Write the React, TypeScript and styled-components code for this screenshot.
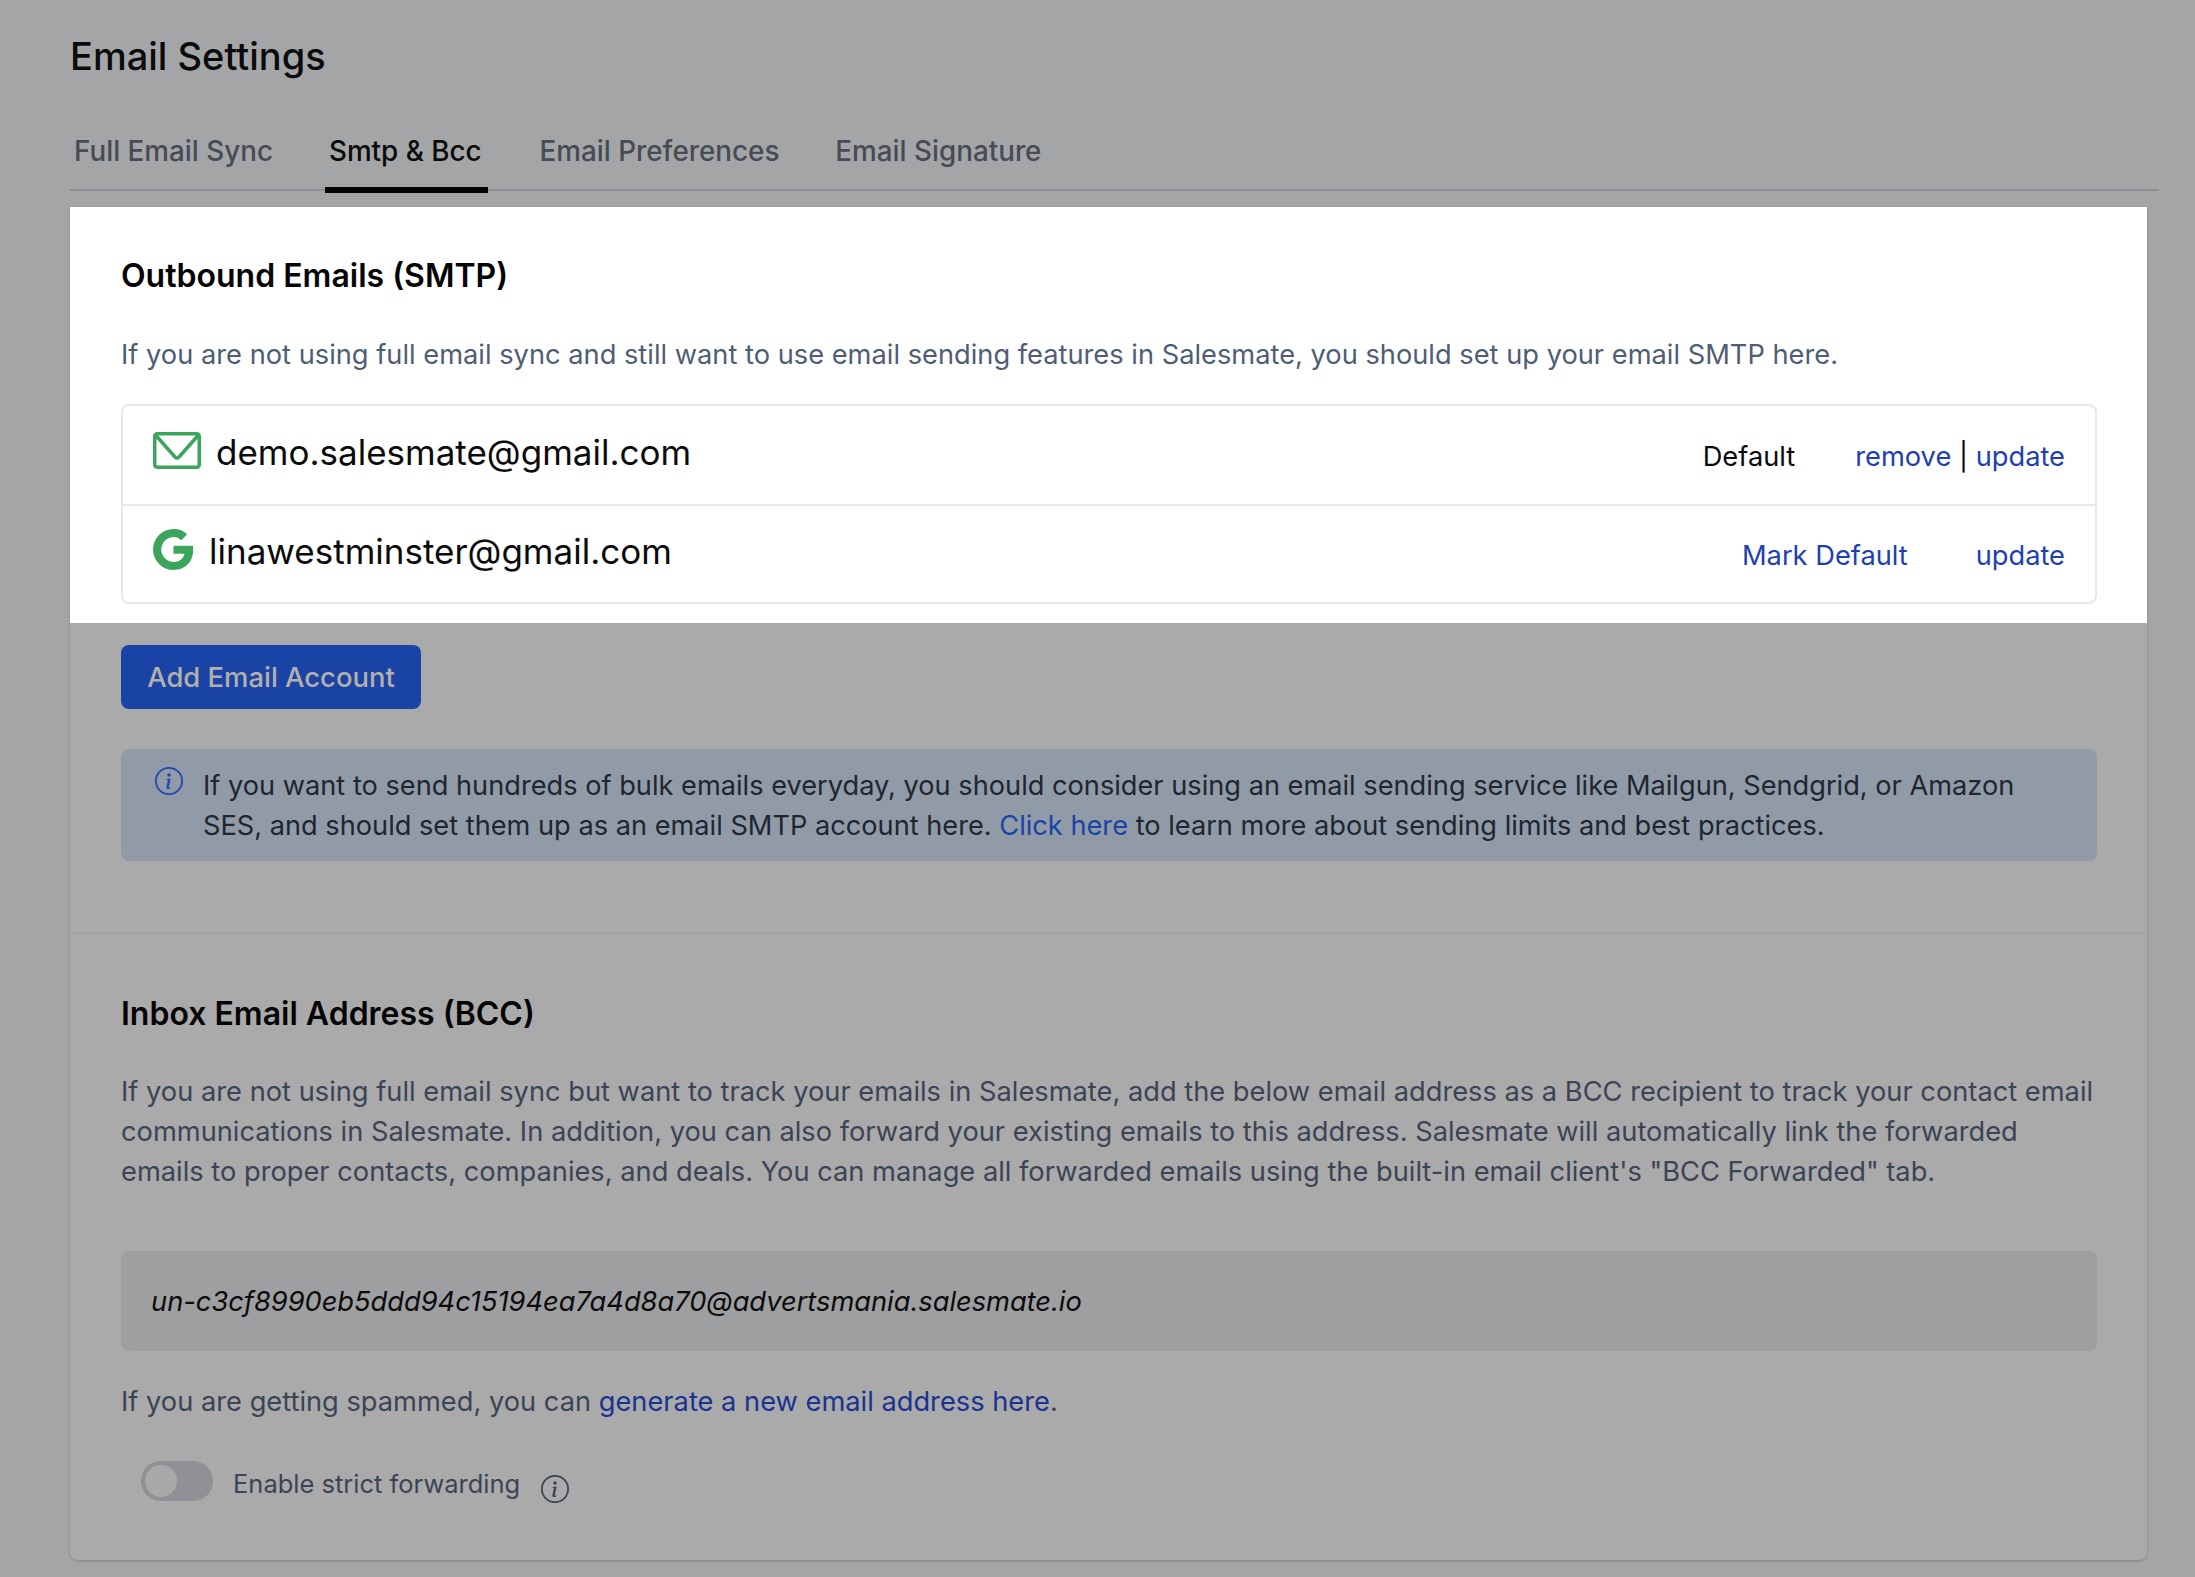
import React from 'react';
import styled, { createGlobalStyle } from 'styled-components';
import { BsGoogle as GoogleIcon, BsInfoCircle as InfoIcon } from 'react-icons/bs';

const GlobalStyle = createGlobalStyle`
  html, body {
    margin: 0;
    background: #a4a5a7;
    font-family: Inter, "Liberation Sans", sans-serif;
  }
`;

const Page = styled.div`
  width: 2195px;
  height: 1577px;
  box-sizing: border-box;
  padding: 30px 36px 0 70px;
  overflow: hidden;
`;

const PageTitle = styled.h1`
  margin: 0;
  font-size: 38px;
  line-height: 52px;
  font-weight: 500;
  color: #0b0b0c;
`;

const Tabs = styled.div`
  display: flex;
  gap: 48px;
  margin-top: 29px;
  height: 80px;
  box-sizing: border-box;
  border-bottom: 2px solid #8e8f92;
`;

const Tab = styled.div<{ $active?: boolean }>`
  height: 82px;
  box-sizing: border-box;
  padding: 23px ${(p) => (p.$active ? '6px' : '4px')} 0 4px;
  font-size: 27.8px;
  line-height: 34px;
  font-weight: 500;
  color: ${(p) => (p.$active ? '#0b0b0c' : '#474b55')};
  border-bottom: ${(p) => (p.$active ? '6px solid #050505' : 'none')};
`;

const Card = styled.div`
  width: 2077px;
  margin-top: 16px;
  background: #aaaaaa;
  border-radius: 0 0 8px 8px;
  box-shadow: 0 1px 3px rgba(0, 0, 0, 0.2);
`;

const Highlighted = styled.section`
  background: #ffffff;
  padding: 50px 50px 19px 51px;
`;

const Dimmed = styled.section`
  padding: 22px 50px 71px 51px;
  border-bottom: 2px solid #a0a1a2;
`;

const BccSection = styled.section`
  padding: 61px 50px 59px 51px;
`;

const SectionTitle = styled.h2`
  margin: 0;
  font-size: 32px;
  line-height: 38px;
  font-weight: 600;
  color: #050505;
`;

const Description = styled.p<{ $dim?: boolean }>`
  margin: ${(p) => (p.$dim ? '39px' : '40px')} 0 0;
  font-size: 27.25px;
  line-height: 40px;
  color: ${(p) => (p.$dim ? '#3b4455' : '#4f5d75')};
`;

const AccountList = styled.div`
  margin-top: 29px;
  width: 1976px;
  box-sizing: border-box;
  border: 2px solid #e8e8ec;
  border-radius: 8px;
`;

const AccountRow = styled.div`
  display: flex;
  align-items: center;
  height: 94px;
  padding: 4px 30px 0;
  & + & {
    height: 92px;
    border-top: 2px solid #e8e8ec;
  }
`;

const AccountName = styled.div`
  display: flex;
  align-items: center;
  gap: 15px;
  flex: 1;
  margin-top: -11px;
  font-size: 35px;
  line-height: 48px;
  color: #0b0b0c;
  svg {
    color: #3ca55c;
    flex: none;
    margin-bottom: 2px;
  }
`;

const DefaultLabel = styled.span`
  font-size: 27.25px;
  line-height: 40px;
  color: #0b0b0c;
`;

const ActionLink = styled.a`
  font-size: 27.25px;
  line-height: 40px;
  color: #1e40af;
  text-decoration: none;
`;

const InlineActions = styled.div`
  margin-left: 60px;
  font-size: 27.25px;
  line-height: 40px;
  color: #0b0b0c;
`;

const SpacedActions = styled.div`
  display: flex;
  justify-content: space-between;
  width: 323px;
`;

const AddButton = styled.button`
  display: block;
  width: 300px;
  height: 64px;
  padding: 0;
  border: none;
  border-radius: 8px;
  background: #1a43a6;
  color: #b3b0ab;
  font: 500 27.4px/40px Inter, "Liberation Sans", sans-serif;
`;

const Notice = styled.div`
  display: flex;
  gap: 20px;
  margin-top: 40px;
  width: 1976px;
  height: 112px;
  box-sizing: border-box;
  padding: 17px 34px 0;
  border-radius: 8px;
  background: #919ba7;
  font-size: 27.2px;
  line-height: 40px;
  color: #20252f;
  svg {
    flex: none;
    margin-top: 1px;
    color: #1e48ad;
  }
`;

const NoticeLink = styled.a`
  color: #1a43a6;
  text-decoration: none;
`;

const BccAddress = styled.div`
  margin-top: 59px;
  width: 1976px;
  height: 100px;
  box-sizing: border-box;
  padding: 0 30px;
  display: flex;
  align-items: center;
  border-radius: 8px;
  background: #9e9fa1;
  font-size: 27.25px;
  font-style: italic;
  color: #0b0b0c;
`;

const SpamNote = styled.p`
  margin: 31px 0 0;
  font-size: 27.25px;
  line-height: 40px;
  color: #3b4455;
`;

const SpamLink = styled.a`
  color: #1a3390;
  text-decoration: none;
`;

const ForwardingRow = styled.div`
  display: flex;
  align-items: center;
  margin: 39px 0 0 20px;
  height: 40px;
`;

const Toggle = styled.div`
  width: 72px;
  height: 40px;
  box-sizing: border-box;
  padding: 4px;
  border-radius: 20px;
  background: #8f9197;
`;

const Knob = styled.div`
  width: 32px;
  height: 32px;
  border-radius: 50%;
  background: #a9a9a9;
`;

const ForwardingLabel = styled.span`
  margin: 6px 0 0 20px;
  font-size: 25.5px;
  line-height: 40px;
  color: #3b4455;
`;

const ForwardingInfo = styled(InfoIcon)`
  margin: 16px 0 0 21px;
  color: #3b4455;
`;

const MailIcon = () => (
  <svg width="48" height="37" viewBox="0 0 48 37" fill="none" stroke="currentColor" strokeWidth="3.5" strokeLinejoin="round" strokeLinecap="round">
    <rect x="1.75" y="1.75" width="44.5" height="33.5" rx="2.5" />
    <path d="M2.5 3 L22 25 Q24 27 26 25 L45.5 3" />
  </svg>
);

export default function App() {
  return (
    <Page>
      <GlobalStyle />
      <PageTitle>Email Settings</PageTitle>
      <Tabs>
        <Tab>Full Email Sync</Tab>
        <Tab $active>{'Smtp & Bcc'}</Tab>
        <Tab>Email Preferences</Tab>
        <Tab>Email Signature</Tab>
      </Tabs>
      <Card>
        <Highlighted>
          <SectionTitle>Outbound Emails (SMTP)</SectionTitle>
          <Description>
            If you are not using full email sync and still want to use email sending features in Salesmate, you should set up your email SMTP here.
          </Description>
          <AccountList>
            <AccountRow>
              <AccountName>
                <MailIcon />
                demo.salesmate@gmail.com
              </AccountName>
              <DefaultLabel>Default</DefaultLabel>
              <InlineActions>
                <ActionLink>remove</ActionLink> | <ActionLink>update</ActionLink>
              </InlineActions>
            </AccountRow>
            <AccountRow>
              <AccountName>
                <GoogleIcon size={41} />
                linawestminster@gmail.com
              </AccountName>
              <SpacedActions>
                <ActionLink>Mark Default</ActionLink>
                <ActionLink>update</ActionLink>
              </SpacedActions>
            </AccountRow>
          </AccountList>
        </Highlighted>
        <Dimmed>
          <AddButton>Add Email Account</AddButton>
          <Notice>
            <InfoIcon size={28} />
            <div>
              If you want to send hundreds of bulk emails everyday, you should consider using an email sending service like Mailgun, Sendgrid, or Amazon SES, and should set them up as an email SMTP account here. <NoticeLink>Click here</NoticeLink> to learn more about sending limits and best practices.
            </div>
          </Notice>
        </Dimmed>
        <BccSection>
          <SectionTitle>Inbox Email Address (BCC)</SectionTitle>
          <Description $dim>
            If you are not using full email sync but want to track your emails in Salesmate, add the below email address as a BCC recipient to track your contact email communications in Salesmate. In addition, you can also forward your existing emails to this address. Salesmate will automatically link the forwarded emails to proper contacts, companies, and deals. You can manage all forwarded emails using the built-in email client's "BCC Forwarded" tab.
          </Description>
          <BccAddress>un-c3cf8990eb5ddd94c15194ea7a4d8a70@advertsmania.salesmate.io</BccAddress>
          <SpamNote>
            If you are getting spammed, you can <SpamLink>generate a new email address here</SpamLink>.
          </SpamNote>
          <ForwardingRow>
            <Toggle>
              <Knob />
            </Toggle>
            <ForwardingLabel>Enable strict forwarding</ForwardingLabel>
            <ForwardingInfo size={28} />
          </ForwardingRow>
        </BccSection>
      </Card>
    </Page>
  );
}
